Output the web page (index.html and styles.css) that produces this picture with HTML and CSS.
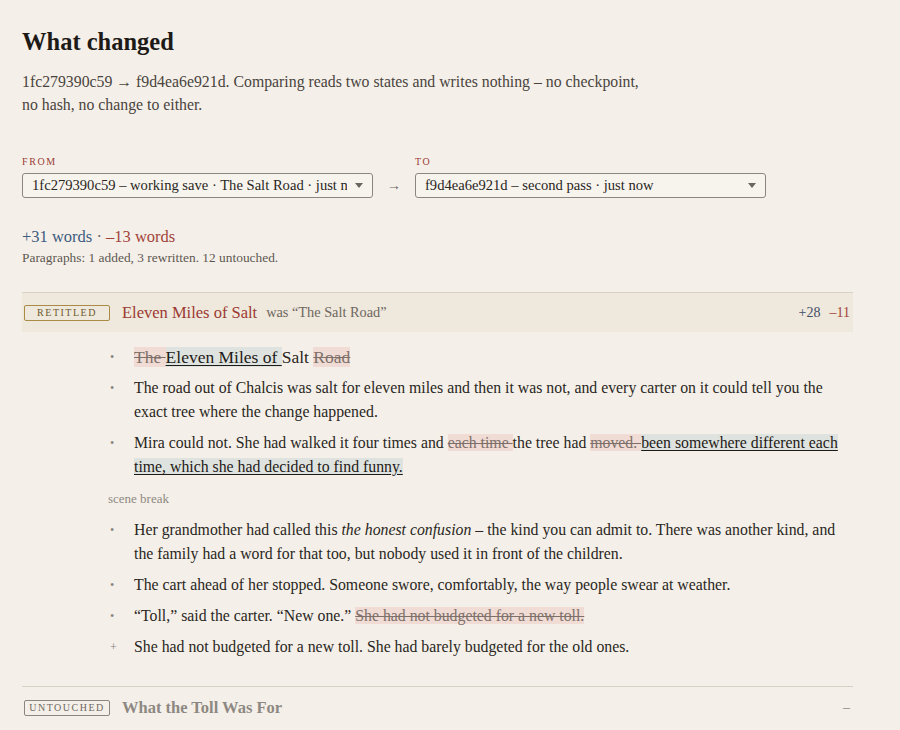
FILE: index.html
```html
<!DOCTYPE html>
<html>
<head>
<meta charset="utf-8">
<link rel="stylesheet" href="styles.css">
</head>
<body>
<main class="page">
  <h1 class="title">What changed</h1>
  <p class="lede">1fc279390c59 → f9d4ea6e921d. Comparing reads two states and writes nothing – no checkpoint, no hash, no change to either.</p>

  <div class="pickers">
    <div class="picker">
      <div class="picker-label">FROM</div>
      <div class="select"><span class="select-text">1fc279390c59 – working save · The Salt Road · just now</span><span class="caret"></span></div>
    </div>
    <div class="picker-arrow">→</div>
    <div class="picker">
      <div class="picker-label">TO</div>
      <div class="select"><span class="select-text">f9d4ea6e921d – second pass · just now</span><span class="caret"></span></div>
    </div>
  </div>

  <div class="totals"><span class="plus">+31 words</span> <span class="dot">·</span> <span class="minus">–13 words</span></div>
  <div class="para-count">Paragraphs: 1 added, 3 rewritten. 12 untouched.</div>

  <section class="chapter">
    <div class="chapter-head">
      <span class="badge badge-retitled">RETITLED</span>
      <span class="chapter-title">Eleven Miles of Salt</span>
      <span class="was">was “The Salt Road”</span>
      <span class="counts"><span class="plus">+28</span><span class="minus">–11</span></span>
    </div>
    <div class="chapter-body">
      <ul class="paras">
        <li><span class="mark">•</span><p class="heading-line"><del>The </del><ins>Eleven Miles of </ins>Salt <del>Road</del></p></li>
        <li><span class="mark">•</span><p>The road out of Chalcis was salt for eleven miles and then it was not, and every carter on it could tell you the exact tree where the change happened.</p></li>
        <li><span class="mark">•</span><p>Mira could not. She had walked it four times and <del>each time </del>the tree had <del>moved. </del><ins>been somewhere different each time, which she had decided to find funny.</ins></p></li>
      </ul>
      <div class="scene-break">scene break</div>
      <ul class="paras">
        <li><span class="mark">•</span><p>Her grandmother had called this <em>the honest confusion</em> – the kind you can admit to. There was another kind, and the family had a word for that too, but nobody used it in front of the children.</p></li>
        <li><span class="mark">•</span><p>The cart ahead of her stopped. Someone swore, comfortably, the way people swear at weather.</p></li>
        <li><span class="mark">•</span><p>“Toll,” said the carter. “New one.” <del>She had not budgeted for a new toll.</del></p></li>
        <li><span class="mark">+</span><p>She had not budgeted for a new toll. She had barely budgeted for the old ones.</p></li>
      </ul>
    </div>
  </section>

  <section class="chapter chapter-untouched">
    <div class="chapter-head">
      <span class="badge badge-untouched">UNTOUCHED</span>
      <span class="chapter-title">What the Toll Was For</span>
      <span class="counts"><span class="none">–</span></span>
    </div>
  </section>
</main>
</body>
</html>
```

FILE: styles.css
```css
* { box-sizing: border-box; }
html, body {
  margin: 0;
  padding: 0;
  background: #f4f0e9;
}
body {
  font-family: "Liberation Serif", "Times New Roman", serif;
  color: #2a2622;
}
.page {
  padding: 26px 47px 0 22px;
}
.title {
  font-size: 24.5px;
  font-weight: bold;
  margin: 0 0 12px 0;
  line-height: 32px;
  color: #1e1a17;
}
.lede {
  margin: 0;
  font-size: 15.8px;
  line-height: 23px;
  color: #4a433d;
  max-width: 622px;
}
.pickers {
  display: flex;
  align-items: flex-end;
  margin-top: 40px;
}
.picker { width: 351px; }
.picker-label {
  font-size: 10px;
  letter-spacing: 1.6px;
  color: #9b3a32;
  line-height: 12px;
  margin-bottom: 5px;
}
.select {
  display: flex;
  align-items: center;
  height: 25px;
  border: 1px solid #8c8680;
  border-radius: 3px;
  background: #f7f4ee;
  padding: 0 9px 0 9px;
}
.select-text {
  flex: 1;
  white-space: nowrap;
  overflow: hidden;
  font-size: 14.6px;
  color: #2a2622;
}
.caret {
  width: 0;
  height: 0;
  border-left: 4px solid transparent;
  border-right: 4px solid transparent;
  border-top: 5px solid #6a6560;
  margin-left: 8px;
}
.picker-arrow {
  width: 42px;
  text-align: center;
  font-size: 14px;
  color: #6a6560;
  line-height: 24px;
}
.totals {
  margin-top: 28px;
  font-size: 16.5px;
  line-height: 22px;
}
.plus { color: #3d5b80; }
.minus { color: #a2433a; }
.dot { color: #6a6560; }
.para-count {
  font-size: 13.4px;
  color: #5e5751;
  margin-top: 2px;
  line-height: 16px;
}
.chapter {
  margin-top: 26px;
  border-top: 1px solid #d9d1c5;
}
.chapter-head {
  display: flex;
  align-items: center;
  background: #efe8dc;
  padding: 0 3px 0 2px;
  height: 39px;
}
.badge {
  font-size: 10px;
  letter-spacing: 1.5px;
  border: 1px solid #a98b45;
  border-radius: 2px;
  line-height: 12px;
  padding: 1px 0;
  width: 86px;
  text-align: center;
  color: #6d5a2e;
}
.chapter-title {
  margin-left: 12px;
  font-size: 16.5px;
  color: #9b3a32;
}
.was {
  margin-left: 9px;
  font-size: 14.3px;
  color: #6e6760;
}
.counts {
  margin-left: auto;
  display: flex;
  gap: 9px;
  font-size: 14px;
}
.counts .plus { color: #3f4e66; }
.chapter-body {
  padding: 13px 0 27px 86px;
}
.paras {
  list-style: none;
  margin: 0;
  padding: 0;
  display: flex;
  flex-direction: column;
  gap: 7px;
}
.paras li {
  display: flex;
}
.mark {
  width: 26px;
  flex: none;
  font-size: 12px;
  color: #8a847d;
  line-height: 24px;
  padding-left: 2px;
}
.paras p {
  margin: 0;
  font-size: 15.8px;
  line-height: 24px;
  color: #2a2622;
}
.paras p.heading-line { font-size: 17.5px; }
del {
  text-decoration: line-through;
  color: #7d706a;
  background: #f0dcd5;
}
ins {
  text-decoration: underline;
  text-underline-offset: 2px;
  background: #dfe3df;
  color: #1e1a17;
}
.scene-break {
  font-size: 13px;
  color: #8f8983;
  margin: 12px 0 11px 0;
  line-height: 16px;
}
.chapter-untouched {
  margin-top: 0;
}
.chapter-untouched .chapter-head {
  background: transparent;
  height: 42px;
}
.badge-untouched {
  border-color: #8c8680;
  color: #6e6760;
}
.chapter-untouched .chapter-title {
  color: #8e8882;
  font-weight: bold;
}
.none { color: #8e8882; }
```
